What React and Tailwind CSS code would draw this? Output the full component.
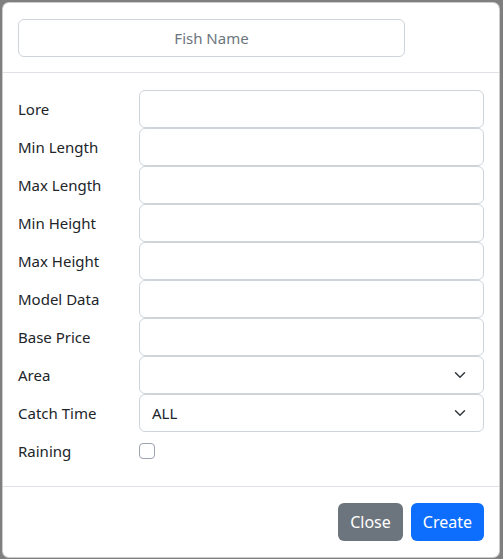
import React from 'react';

const fields = ['Lore', 'Min Length', 'Max Length', 'Min Height', 'Max Height', 'Model Data', 'Base Price'];

const Chevron = () => (
  <svg className="w-4 h-3 text-[#343a40]" viewBox="0 0 16 16" fill="none">
    <path d="m2 5 6 6 6-6" stroke="currentColor" strokeWidth="2" strokeLinecap="round" strokeLinejoin="round" />
  </svg>
);

const FormRow = ({ label, children }) => (
  <div className="flex items-center h-[38px]">
    <span className="w-[121px] shrink-0 text-[#212529]">{label}</span>
    {children}
  </div>
);

const SelectBox = ({ value }) => (
  <div className="flex-1 h-[38px] flex items-center justify-between pl-3 pr-[15px] border border-[#ced4da] rounded-[6px] bg-white text-[#212529]">
    <span>{value}</span>
    <Chevron />
  </div>
);

export default function App() {
  return (
    <div className="w-[503px] h-[559px] bg-[#7f7f7f] pt-[2px] pl-[2px] overflow-hidden" style={{ fontFamily: '"Noto Sans", "Open Sans", sans-serif' }}>
      <div className="w-[498px] bg-white border border-black/20 rounded-[7px] text-[15px]">
        <div className="px-[15px] pt-4 pb-[15px] border-b border-[#dee2e6]">
          <div className="w-[387px] h-[38px] border border-[#ced4da] rounded-[6px] flex items-center justify-center text-[#6c757d]">
            Fish Name
          </div>
        </div>

        <div className="px-[15px] pt-[17px] pb-4">
          {fields.map((f) => (
            <FormRow key={f} label={f}>
              <div className="flex-1 h-[38px] border border-[#ced4da] rounded-[6px] bg-white" />
            </FormRow>
          ))}
          <FormRow label="Area">
            <SelectBox value="" />
          </FormRow>
          <FormRow label="Catch Time">
            <SelectBox value="ALL" />
          </FormRow>
          <FormRow label="Raining">
            <div className="w-4 h-4 border border-[#9ca3af] rounded-[4px] bg-white" />
          </FormRow>
        </div>

        <div className="border-t border-[#dee2e6] px-[15px] py-4 flex justify-end gap-2">
          <button className="h-[38px] px-3 rounded-[6px] bg-[#6c757d] text-white text-base">Close</button>
          <button className="h-[38px] px-3 rounded-[6px] bg-[#0d6efd] text-white text-base">Create</button>
        </div>
      </div>
    </div>
  );
}
